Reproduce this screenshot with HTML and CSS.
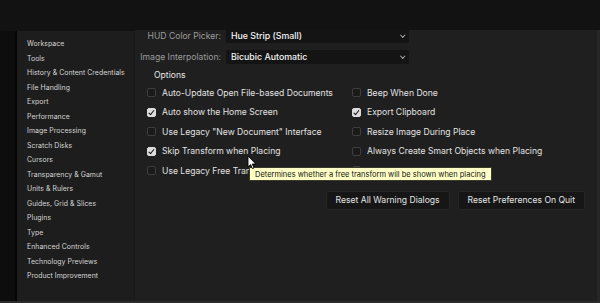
FILE: index.html
```html
<!DOCTYPE html>
<html lang="en">
<head>
    <meta charset="UTF-8">
    <title>Preferences</title>
    <link rel="stylesheet" href="styles.css">
</head>
<body>
    <div class="topbar"></div>
    <section class="window">
        <div class="edge"></div>
        <ul class="sidebar">
            <li>Workspace</li>
            <li>Tools</li>
            <li>History &amp; Content Credentials</li>
            <li>File Handling</li>
            <li>Export</li>
            <li>Performance</li>
            <li>Image Processing</li>
            <li>Scratch Disks</li>
            <li>Cursors</li>
            <li>Transparency &amp; Gamut</li>
            <li>Units &amp; Rulers</li>
            <li>Guides, Grid &amp; Slices</li>
            <li>Plugins</li>
            <li>Type</li>
            <li>Enhanced Controls</li>
            <li>Technology Previews</li>
            <li>Product Improvement</li>
        </ul>
        <div class="content">
            <div class="field">
                <label>HUD Color Picker:</label>
                <div class="select">Hue Strip (Small) <span class="chevron"></span></div>
            </div>
            <div class="field">
                <label>Image Interpolation:</label>
                <div class="select">Bicubic Automatic <span class="chevron"></span></div>
            </div>
            <div class="group-title">Options</div>
            <div class="options">
                <div class="option"><span class="box"></span>Auto-Update Open File-based Documents</div>
                <div class="option"><span class="box"></span>Beep When Done</div>
                <div class="option"><span class="box checked"></span>Auto show the Home Screen</div>
                <div class="option"><span class="box checked"></span>Export Clipboard</div>
                <div class="option"><span class="box"></span>Use Legacy "New Document" Interface</div>
                <div class="option"><span class="box"></span>Resize Image During Place</div>
                <div class="option"><span class="box checked"></span>Skip Transform when Placing</div>
                <div class="option"><span class="box"></span>Always Create Smart Objects when Placing</div>
                <div class="option"><span class="box"></span>Use Legacy Free Transform</div>
                <div class="option"><span class="box"></span>Enable Legacy Text Rendering</div>
            </div>
            <div class="actions">
                <button>Reset All Warning Dialogs</button>
                <button>Reset Preferences On Quit</button>
            </div>

            <div class="tooltip">Determines whether a free transform will be shown when placing</div>
            <svg class="cursor" width="10" height="15" viewBox="0 0 10 15">
                <path d="M1 1 L1 12 L3.6 9.6 L5.4 13.6 L7 12.9 L5.3 9 L8.8 9 Z" fill="#fff" stroke="#000" stroke-width="0.9" stroke-linejoin="round"/>
            </svg>
        </div>
    </section>
</body>
</html>
```
FILE: styles.css
```css
* {
    box-sizing: border-box;
}

html, body {
    margin: 0;
    height: 100%;
    background: #121212;
    font-family: 'Inter', 'Liberation Sans', sans-serif;
    overflow: hidden;
}

.topbar {
    height: 31px;
    background: #121212;
}

.window {
    display: flex;
    height: 272px;
    border-bottom: 2px solid #2b2b2b;
}

.edge {
    width: 17px;
    background: #0d0d0d;
    border-right: 2px solid #050505;
}

.sidebar {
    list-style: none;
    margin: 0;
    padding: 6px 0 0 10px;
    width: 118px;
    background: #1d1d1d;
    border-right: 1px solid #181818;
}

.sidebar li {
    font-size: 6.9px;
    line-height: 14.5px;
    color: #d6d6d6;
    white-space: nowrap;
    letter-spacing: 0.05px;
}

.content {
    flex: 1;
    position: relative;
    background: #1f1f1f;
    border-right: 3px solid #262626;
    margin-top: -1px;
}

.field {
    display: flex;
    align-items: center;
    height: 21px;
}

.field:first-child {
    margin-top: -5px;
}

.field label {
    width: 86px;
    text-align: right;
    font-size: 8.6px;
    color: #9c9c9c;
}

.select {
    position: relative;
    margin-left: 5px;
    width: 183px;
    height: 14px;
    background: #141414;
    border-radius: 2px;
    color: #f4f4f4;
    font-size: 8.8px;
    font-weight: 500;
    line-height: 14px;
    padding-left: 5px;
}

.chevron {
    position: absolute;
    right: 5px;
    top: 4px;
    width: 3.5px;
    height: 3.5px;
    border-right: 1px solid #aaa;
    border-bottom: 1px solid #aaa;
    transform: rotate(45deg);
}

.group-title {
    margin: 2px 0 0 19px;
    font-size: 8.6px;
    color: #e6e6e6;
    height: 12px;
    line-height: 12px;
}

.options {
    display: grid;
    grid-template-columns: 205px 1fr;
    margin: 2px 0 0 12px;
}

.option {
    display: flex;
    align-items: center;
    height: 19.5px;
    font-size: 8.6px;
    color: #e2e2e2;
    white-space: nowrap;
}

.box {
    position: relative;
    width: 9px;
    height: 9px;
    margin-right: 6px;
    border: 1px solid #3e3e3e;
    background: #1a1a1a;
    border-radius: 2px;
}

.box.checked {
    background: #dcdcdc;
    border-color: #dcdcdc;
}

.box.checked::after {
    content: "";
    position: absolute;
    left: 2.4px;
    top: 0.2px;
    width: 2.2px;
    height: 4.6px;
    border-right: 1.3px solid #111;
    border-bottom: 1.3px solid #111;
    transform: rotate(40deg);
}

.actions {
    display: flex;
    justify-content: flex-end;
    gap: 8px;
    margin: 10px 12px 0 0;
}

.actions button {
    font-family: inherit;
    font-size: 8.6px;
    color: #e4e4e4;
    background: #161616;
    border: 1px solid #262626;
    border-radius: 2px;
    height: 19px;
    padding: 0 9px;
}

.tooltip {
    position: absolute;
    left: 114px;
    top: 137px;
    padding: 0 5px;
    height: 14px;
    line-height: 13px;
    background: #ffffc6;
    border: 1px solid #3a3a28;
    color: #111;
    font-size: 7.5px;
    white-space: nowrap;
}

.cursor {
    position: absolute;
    left: 112px;
    top: 125px;
}
```
